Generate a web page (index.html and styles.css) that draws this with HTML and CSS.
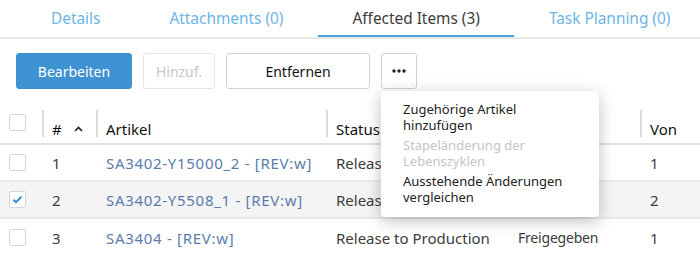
FILE: index.html
```html
<!DOCTYPE html>
<html lang="de">
<head>
    <meta charset="UTF-8">
    <title>Affected Items</title>
    <link rel="stylesheet" href="styles.css">
</head>
<body>
<div class="tabs">
    <div class="tab">Details</div>
    <div class="tab">Attachments (0)</div>
    <div class="tab active">Affected Items (3)</div>
    <div class="tab">Task Planning (0)</div>
</div>

<div class="toolbar">
    <button class="btn primary">Bearbeiten</button>
    <button class="btn disabled">Hinzuf.</button>
    <button class="btn remove">Entfernen</button>
    <button class="btn more">
        <svg width="14" height="4" viewBox="0 0 14 4"><circle cx="2" cy="2" r="1.7"/><circle cx="7" cy="2" r="1.7"/><circle cx="12" cy="2" r="1.7"/></svg>
    </button>
</div>

<table class="items">
    <colgroup>
        <col style="width: 42px">
        <col style="width: 54px">
        <col style="width: 230px">
        <col style="width: 182px">
        <col style="width: 132px">
        <col>
    </colgroup>
    <thead>
    <tr>
        <th class="c-check"><span class="box"></span></th>
        <th><span class="sep"></span># <svg class="caret" width="9" height="6" viewBox="0 0 9 6"><path d="M1 5 L4.5 1.5 L8 5" fill="none" stroke="#222" stroke-width="1.6"/></svg></th>
        <th><span class="sep"></span>Artikel</th>
        <th><span class="sep"></span>Status</th>
        <th><span class="sep"></span></th>
        <th><span class="sep"></span>Von</th>
    </tr>
    </thead>
    <tbody>
    <tr>
        <td class="c-check"><span class="box"></span></td>
        <td>1</td>
        <td><a href="#">SA3402-Y15000_2 - [REV:w]</a></td>
        <td>Release to Production</td>
        <td class="state">Freigegeben</td>
        <td>1</td>
    </tr>
    <tr class="selected">
        <td class="c-check"><span class="box">
            <svg width="11" height="9" viewBox="0 0 11 9"><path d="M1.5 4.8 L4 7.2 L9.5 1.6" fill="none" stroke="#2b8ae0" stroke-width="2"/></svg>
        </span></td>
        <td>2</td>
        <td><a href="#">SA3402-Y5508_1 - [REV:w]</a></td>
        <td>Release to Production</td>
        <td class="state">Freigegeben</td>
        <td>2</td>
    </tr>
    <tr>
        <td class="c-check"><span class="box"></span></td>
        <td>3</td>
        <td><a href="#">SA3404 - [REV:w]</a></td>
        <td>Release to Production</td>
        <td class="state">Freigegeben</td>
        <td>1</td>
    </tr>
    </tbody>
</table>

<div class="menu">
    <div class="menu-item">Zugehörige Artikel<br>hinzufügen</div>
    <div class="menu-item off">Stapeländerung der<br>Lebenszyklen</div>
    <div class="menu-item">Ausstehende Änderungen<br>vergleichen</div>
</div>
</body>
</html>
```

FILE: styles.css
```css
body {
    margin: 0;
    font-family: "Noto Sans", Arial, sans-serif;
    font-size: 14px;
    color: #3c3c3c;
    background: #fff;
    position: relative;
    overflow: hidden;
}
.tabs {
    display: flex;
    height: 37px;
    padding-left: 17px;
    border-bottom: 2px solid #e8e8e8;
}
.tab {
    padding: 0 34px;
    line-height: 37px;
    font-size: 15.4px;
    color: #6db5e6;
    margin-right: 1px;
    white-space: nowrap;
}
.tab.active {
    color: #3c3c3c;
    box-shadow: inset 0 -2px 0 #4ba3dc;
}
.toolbar {
    display: flex;
    gap: 11px;
    padding: 14px 0 0 16px;
}
.btn {
    height: 36px;
    font-family: inherit;
    font-size: 14px;
    background: #fff;
    color: #111;
    border: 1px solid #cfd3d6;
    border-radius: 3px;
    padding: 0;
}
.btn.primary {
    background: #3f93d2;
    border-color: #3f93d2;
    color: #fff;
    width: 116px;
}
.btn.disabled {
    color: #c3c8cd;
    border-color: #e3e5e7;
    width: 72px;
}
.btn.remove {
    width: 144px;
}
.btn.more {
    width: 36px;
    fill: #222;
}
.btn.more svg {
    display: block;
    margin: 0 auto;
}
.items {
    width: 100%;
    table-layout: fixed;
    border-collapse: separate;
    border-spacing: 0;
    margin-top: 19px;
}
.items th {
    position: relative;
    text-align: left;
    font-weight: normal;
    color: #111;
    height: 37px;
    padding: 6px 10px 0;
    border-bottom: 2px solid #e2e2e2;
    box-sizing: border-box;
    font-size: 15px;
}
.items td {
    height: 37px;
    padding: 0 10px;
    border-bottom: 2px solid #e9e9e9;
    box-sizing: border-box;
    white-space: nowrap;
    font-size: 15px;
}
.items tr:last-child td {
    border-bottom: none;
}
.items tr.selected td {
    background: #f4f4f4;
}
.items .c-check {
    padding-left: 9px;
}
.items th.c-check {
    padding-top: 6px;
    vertical-align: top;
}
.items td.state {
    font-size: 14px;
    letter-spacing: -0.2px;
}
.sep {
    position: absolute;
    left: 0;
    top: 2px;
    height: 27px;
    border-left: 2px solid #dcdcdc;
}
.caret {
    margin-left: 8px;
    vertical-align: 3px;
}
.items a {
    color: #5a7cab;
    text-decoration: none;
    letter-spacing: 0.7px;
}
.box {
    display: block;
    width: 15px;
    height: 15px;
    border: 1px solid #d6d6d6;
    border-radius: 2px;
    background: #fff;
    position: relative;
}
.box svg {
    position: absolute;
    left: 2px;
    top: 3px;
}
.menu {
    position: absolute;
    left: 381px;
    top: 91px;
    width: 218px;
    padding: 8px 0 10px;
    background: #fff;
    border-radius: 4px;
    box-shadow: 0 4px 16px rgba(0, 0, 0, 0.25);
    box-sizing: border-box;
}
.menu-item {
    padding: 2px 22px;
    line-height: 16px;
    font-size: 13px;
    color: #222;
}
.menu-item.off {
    color: #c4c4c4;
}
```
